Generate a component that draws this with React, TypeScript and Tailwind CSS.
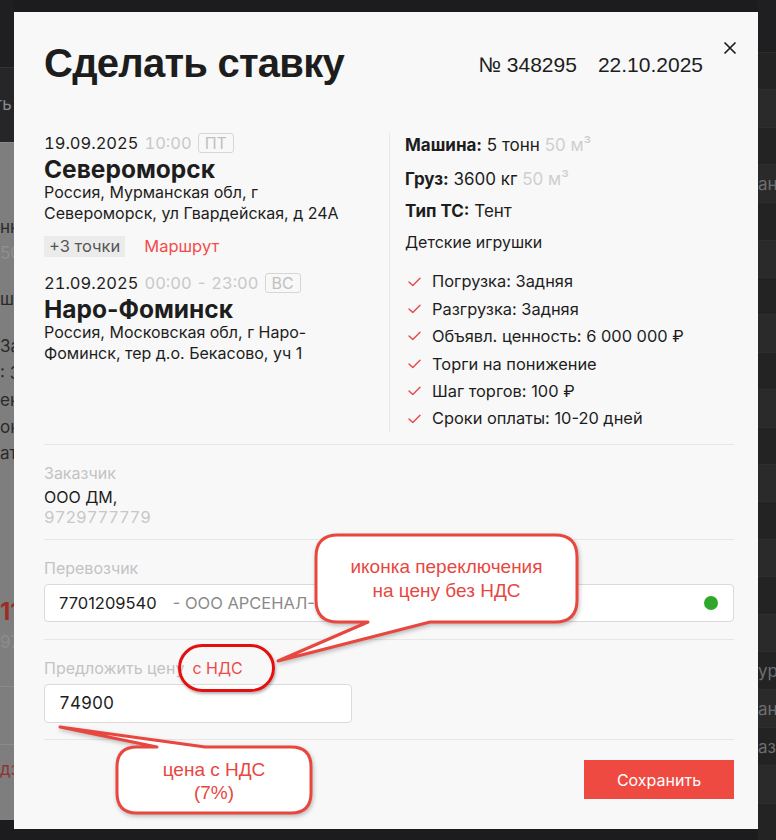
import React from "react";

const CHECKS = [
  "Погрузка: Задняя",
  "Разгрузка: Задняя",
  "Объявл. ценность: 6 000 000 ₽",
  "Торги на понижение",
  "Шаг торгов: 100 ₽",
  "Сроки оплаты: 10-20 дней",
];

const SANS = "font-['Inter','Noto_Sans',sans-serif]";
const ARIAL = "font-['Liberation_Sans','Arial',sans-serif]";

function Check() {
  return (
    <svg width="13" height="10" viewBox="0 0 13 10" className="shrink-0">
      <polyline
        points="1,5 4.8,8.6 12,1.2"
        fill="none"
        stroke="#e8474b"
        strokeWidth="1.4"
        strokeLinecap="round"
        strokeLinejoin="round"
      />
    </svg>
  );
}

function Divider() {
  return <div className="h-px bg-[#e7e7e7]" />;
}

function Label({ children }: { children: React.ReactNode }) {
  return <div className="h-5 text-[16px] leading-5 text-[#c3c3c3]">{children}</div>;
}

function Background() {
  const rows = ["#232324", "#2a2a2b"];
  return (
    <div className="flex h-full w-full justify-between">
      <div className="flex w-[14px] flex-col overflow-hidden whitespace-nowrap text-[17px] leading-5">
        <div className="h-[67px] bg-[#1f1f21]" />
        <div className="h-[75px] border-t border-[#333] bg-[#262628] pt-[26px] text-[#8a8a8a]">
          <span className="-ml-[6px]">ть</span>
        </div>
        <div className="flex h-[678px] flex-col border-t border-[#8a8a8a] bg-[#7e7e7e] pt-[74px] text-[#2a2a2a]">
          <span>нн</span>
          <span className="mt-[6px] text-[#8f8f8f]">50</span>
          <span className="mt-[26px]">шк</span>
          <span className="mt-[27px]">За</span>
          <span className="mt-[7px]">: З</span>
          <span className="mt-[7px]">ен</span>
          <span className="mt-[7px]">ок</span>
          <span className="mt-[6px]">ат</span>
          <span className="mt-[136px] text-[24px] font-bold leading-[26px] text-[#9c2d25]">11</span>
          <span className="mt-[7px] text-[#8c8c8c]">97</span>
          <div className="mt-[34px] h-px bg-[#8a8a8a]" />
          <div className="mt-[57px] h-px bg-[#8a8a8a]" />
          <span className="mt-[14px] text-[#8e3530]">дз</span>
        </div>
        <div className="flex-1 bg-[#1c1c1e]" />
      </div>
      <div className="flex w-[18px] flex-col overflow-hidden whitespace-nowrap bg-[#1f1f21] pt-[52px] text-[17px] leading-[38px] text-[#6e6e6e]">
        {Array.from({ length: 21 }).map((_, i) => (
          <div
            key={i}
            className="h-[38px] border-t border-[#2e2e2e]"
            style={{ background: rows[i % 2] }}
          >
            {i === 3 ? "ан" : i === 16 ? "ур" : i === 17 ? "ан" : i === 18 ? "аз" : ""}
          </div>
        ))}
      </div>
    </div>
  );
}

function Callouts() {
  return (
    <>
      <svg
        className="absolute left-[270px] top-[530px] drop-shadow-[1px_2px_2px_rgba(0,0,0,0.25)]"
        width="320"
        height="140"
        viewBox="0 0 320 140"
      >
        <path
          d="M68,5 H285 Q307,5 307,27 V70 Q307,92 285,92 H160 L8,131 L98,92 H68 Q46,92 46,70 V27 Q46,5 68,5 Z"
          fill="#fff"
          stroke="#e8473f"
          strokeWidth="3"
          strokeLinejoin="round"
        />
      </svg>
      <div
        className={`absolute left-[316px] top-[555px] w-[261px] text-center text-[19px] leading-[24px] text-[#e8473f] ${ARIAL}`}
      >
        <div>иконка переключения</div>
        <div>на цену без НДС</div>
      </div>

      <svg
        className="absolute left-[55px] top-[722px] drop-shadow-[1px_2px_2px_rgba(0,0,0,0.25)]"
        width="265"
        height="100"
        viewBox="0 0 265 100"
      >
        <path
          d="M82,25 H102 L5,5 L150,25 H236 Q256,25 256,45 V71 Q256,91 236,91 H82 Q62,91 62,71 V45 Q62,25 82,25 Z"
          fill="#fff"
          stroke="#e8473f"
          strokeWidth="3"
          strokeLinejoin="round"
        />
      </svg>
      <div
        className={`absolute left-[117px] top-[758px] w-[194px] text-center text-[19px] leading-[23px] text-[#e8473f] ${ARIAL}`}
      >
        <div>цена с НДС</div>
        <div>(7%)</div>
      </div>

      <div className="absolute left-[178px] top-[644px] h-[48px] w-[97px] rounded-[24px] border-[3.5px] border-[#e60f0f] shadow-[1px_2px_3px_rgba(0,0,0,0.3)]" />
    </>
  );
}

export default function App() {
  return (
    <div className={`relative h-[840px] w-[776px] overflow-hidden bg-[#1c1c1e] ${SANS}`}>
      <Background />

      <div className="absolute left-[14px] top-[12px] h-[817px] w-[744px] bg-[#f8f8f8] pl-[30px] pr-[24px] pt-[27px] text-[#1d1d1d]">
        <button type="button" className="absolute left-[709px] top-[29px]">
          <svg width="14" height="14" viewBox="0 0 14 14">
            <path d="M1.5 1.5 L12.5 12.5 M12.5 1.5 L1.5 12.5" stroke="#1d1d1d" strokeWidth="1.7" />
          </svg>
        </button>

        <div className="flex items-start justify-between">
          <h1 className={`text-[40px] font-bold leading-[48px] tracking-[-0.75px] ${ARIAL}`}>
            Сделать ставку
          </h1>
          <div className={`mt-[14px] flex gap-[21px] pr-[31px] text-[21px] leading-6 ${ARIAL}`}>
            <span>№ 348295</span>
            <span>22.10.2025</span>
          </div>
        </div>

        <div className="mt-[46px] flex">
          <div className="w-[345px]">
            <div className="flex h-5 items-center gap-[6px] text-[16.5px] leading-5 tabular-nums">
              <span>19.09.2025</span>
              <span className="text-[#c8c8c8]">10:00</span>
              <span className="rounded-[3px] border border-[#d6d6d6] px-[6px] text-[16px] leading-[18px] text-[#c0c0c0]">
                ПТ
              </span>
            </div>
            <div className="mt-[3px] text-[24.5px] font-bold leading-[26px]">Североморск</div>
            <div className="text-[16px] leading-[21px]">
              Россия, Мурманская обл, г
              <br />
              Североморск, ул Гвардейская, д 24А
            </div>
            <div className="mt-[12px] flex h-[21px] items-center gap-[19px] text-[16.5px]">
              <span className="bg-[#ebebeb] px-[5px] leading-[21px] text-[#555]">+3 точки</span>
              <span className="text-[#f24c4c]">Маршрут</span>
            </div>

            <div className="mt-[16px] flex h-5 items-center gap-[6px] text-[16.5px] leading-5 tabular-nums">
              <span>21.09.2025</span>
              <span className="text-[#c8c8c8]">00:00 - 23:00</span>
              <span className="rounded-[3px] border border-[#d6d6d6] px-[6px] text-[16px] leading-[18px] text-[#c0c0c0]">
                ВС
              </span>
            </div>
            <div className="mt-[3px] text-[24.5px] font-bold leading-[26px]">Наро-Фоминск</div>
            <div className="text-[16px] leading-[21px]">
              Россия, Московская обл, г Наро-
              <br />
              Фоминск, тер д.о. Бекасово, уч 1
            </div>
          </div>

          <div className="border-l border-[#e7e7e7] pl-[15px]">
            <div className="h-6 text-[17px] leading-6">
              <b>Машина:</b> 5 тонн <span className="text-[#cfcfcf]">50 м³</span>
            </div>
            <div className="mt-[10px] h-6 text-[17px] leading-6">
              <b>Груз:</b> 3600 кг <span className="text-[#cfcfcf]">50 м³</span>
            </div>
            <div className="mt-[8px] h-6 text-[17px] leading-6">
              <b>Тип ТС:</b> Тент
            </div>
            <div className="mt-[7px] h-6 text-[16px] leading-6">Детские игрушки</div>
            <ul className="mt-[14px]">
              {CHECKS.map((c) => (
                <li key={c} className="flex h-[27.4px] items-center gap-[11px] pl-[3px] text-[16.4px]">
                  <Check />
                  <span>{c}</span>
                </li>
              ))}
            </ul>
          </div>
        </div>

        <div className="mt-[12px]">
          <Divider />
        </div>

        <div className="mt-[18px]">
          <Label>Заказчик</Label>
          <div className="mt-[4px] h-5 text-[16px] leading-5">ООО ДМ,</div>
          <div className="h-5 text-[16.5px] leading-5 tabular-nums text-[#c8c8c8]">9729777779</div>
        </div>

        <div className="mt-[12px]">
          <Divider />
        </div>

        <div className="mt-[18px]">
          <Label>Перевозчик</Label>
          <div className="mt-[6px] flex h-[38px] items-center rounded-[4px] border border-[#dadada] bg-white pl-[14px] pr-[15px] text-[16.5px]">
            <span>7701209540</span>
            <span className="ml-[16px] text-[#8a8a8a]">- ООО АРСЕНАЛ-МЕТАЛЛ</span>
            <span className="ml-auto h-[14px] w-[14px] rounded-full bg-[#2ea82a]" />
          </div>
        </div>

        <div className="mt-[17px]">
          <Divider />
        </div>

        <div className="mt-[18px]">
          <div className="flex h-5 items-center gap-[8px] text-[16px] leading-5">
            <span className="text-[#c3c3c3]">Предложить цену</span>
            <span className="text-[#ef4a4a]">с НДС</span>
          </div>
          <div className="mt-[6px] flex h-[39px] w-[308px] items-center rounded-[4px] border border-[#dadada] bg-white pl-[14px] text-[17px] tabular-nums">
            74900
          </div>
        </div>

        <div className="mt-[16px]">
          <Divider />
        </div>

        <div className="mt-[20px] flex justify-end">
          <button
            type="button"
            className="h-[39px] w-[150px] bg-[#ef4a42] text-[16px] text-white"
          >
            Сохранить
          </button>
        </div>
      </div>

      <Callouts />
    </div>
  );
}
